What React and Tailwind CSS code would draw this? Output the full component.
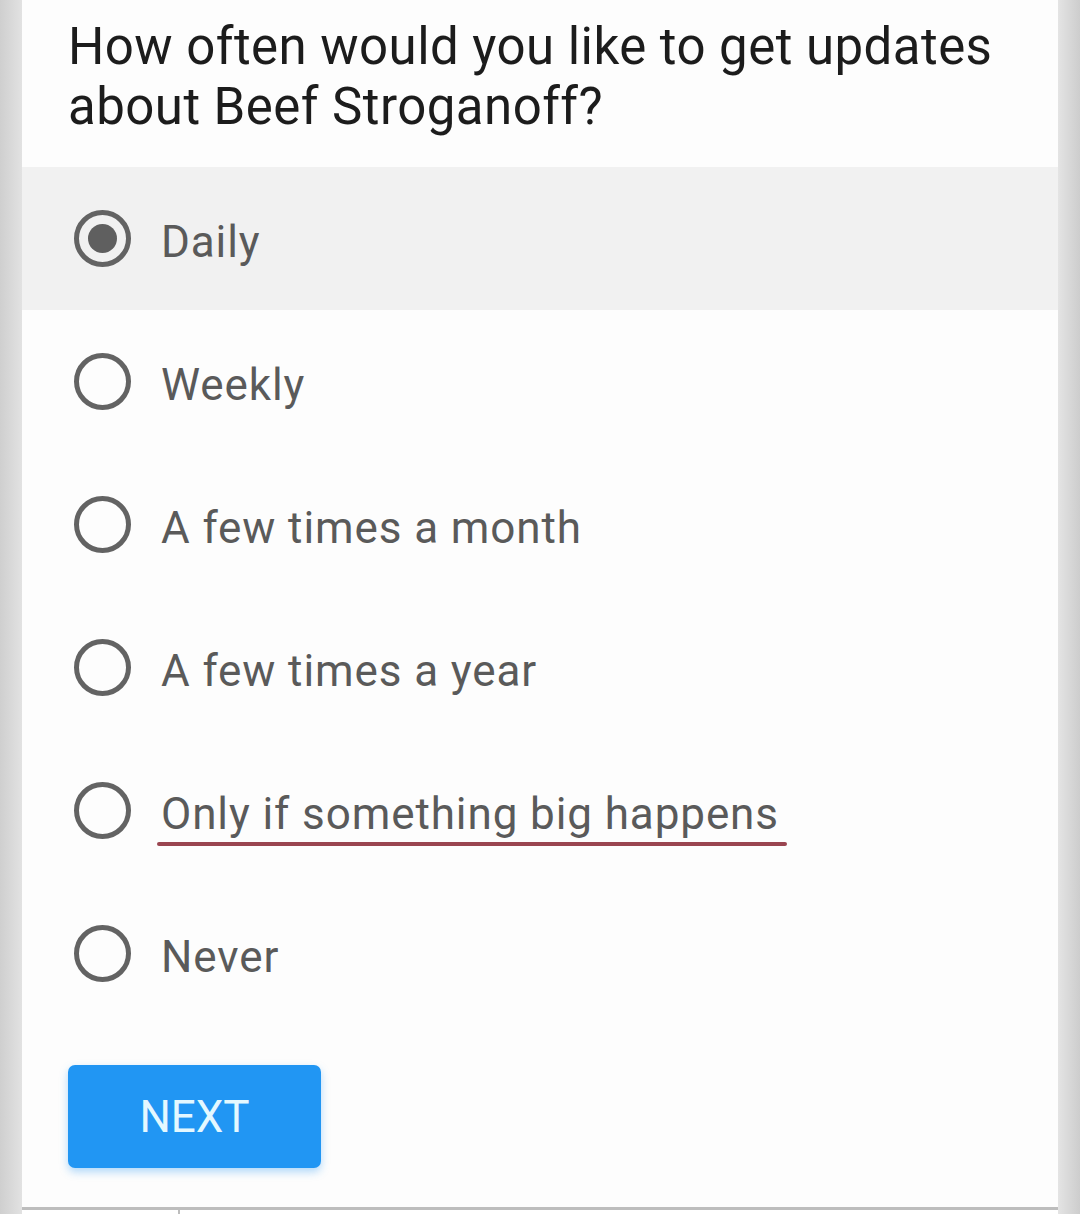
import React from "react";

const options = [
  "Daily",
  "Weekly",
  "A few times a month",
  "A few times a year",
  "Only if something big happens",
  "Never",
];

function Radio({ checked }) {
  return (
    <div className="w-[57px] h-[57px] rounded-full border-[5px] border-[#636363] flex items-center justify-center shrink-0">
      {checked && <div className="w-[29px] h-[29px] rounded-full bg-[#5f5f5f]" />}
    </div>
  );
}

export default function App() {
  return (
    <div className="w-[1080px] h-[1214px] flex bg-[#d6d6d6] overflow-hidden" style={{ fontFamily: "Roboto, 'Noto Sans', sans-serif" }}>
      <div className="w-[22px] bg-gradient-to-r from-[#cfcfcf] to-[#e2e2e2]" />
      <div className="flex-1 flex flex-col bg-[#fdfdfd]">
        <div className="h-[1207px] flex flex-col">
          <div className="pt-[17px] pb-[30px] pl-[46px] pr-[10px] text-[51px] leading-[60px] text-[#1c1c1c] tracking-[0.45px]">
            How often would you like to get updates about Beef Stroganoff?
          </div>
          {options.map((o, i) => (
            <div key={o} className={`h-[143px] flex items-center pl-[52px] ${i === 0 ? "bg-[#f1f1f1]" : ""}`}>
              <Radio checked={i === 0} />
              <span className="ml-[30px] mt-[7px] text-[44px] text-[#5a5a5a] relative tracking-[0.9px]">
                {o}
                {i === 4 && (
                  <span className="absolute left-[-4px] right-[-8px] bottom-[1px] h-[4px] bg-[#9a4550] rounded-full" />
                )}
              </span>
            </div>
          ))}
          <div className="pl-[46px] pt-[40px]">
            <button className="w-[253px] h-[103px] rounded-[7px] bg-[#2196f3] text-[#e4f8ff] text-[44px] shadow-[0_4px_8px_rgba(33,150,243,0.35)] flex items-center justify-center">
              NEXT
            </button>
          </div>
        </div>
        <div className="flex-1 border-t-[3px] border-[#bdbdbd] bg-white relative">
          <div className="absolute left-[156px] top-0 w-[2px] h-full bg-[#bdbdbd]" />
        </div>
      </div>
      <div className="w-[22px] bg-gradient-to-r from-[#e4e4e4] to-[#cdcdcd]" />
    </div>
  );
}
